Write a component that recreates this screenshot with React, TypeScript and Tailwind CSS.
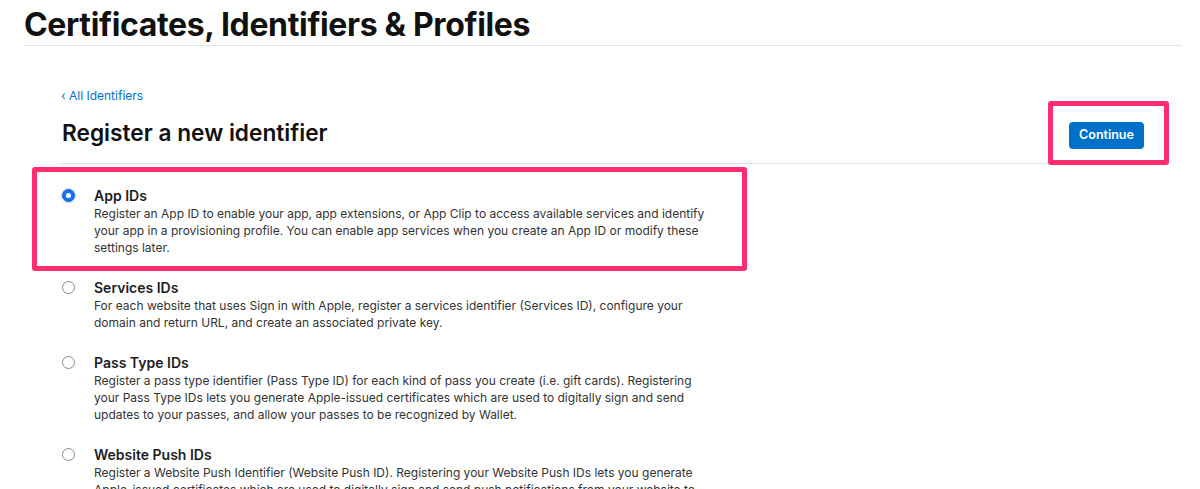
import React from "react";

const items = [
  {
    title: "App IDs",
    checked: true,
    lines: [
      "Register an App ID to enable your app, app extensions, or App Clip to access available services and identify",
      "your app in a provisioning profile. You can enable app services when you create an App ID or modify these",
      "settings later.",
    ],
  },
  {
    title: "Services IDs",
    lines: [
      "For each website that uses Sign in with Apple, register a services identifier (Services ID), configure your",
      "domain and return URL, and create an associated private key.",
    ],
  },
  {
    title: "Pass Type IDs",
    lines: [
      "Register a pass type identifier (Pass Type ID) for each kind of pass you create (i.e. gift cards). Registering",
      "your Pass Type IDs lets you generate Apple-issued certificates which are used to digitally sign and send",
      "updates to your passes, and allow your passes to be recognized by Wallet.",
    ],
  },
  {
    title: "Website Push IDs",
    lines: [
      "Register a Website Push Identifier (Website Push ID). Registering your Website Push IDs lets you generate",
      "Apple-issued certificates which are used to digitally sign and send push notifications from your website to",
      "macOS.",
    ],
  },
];

function Radio({ checked }: { checked?: boolean }) {
  return checked ? (
    <div className="w-[13px] h-[13px] rounded-full bg-[#1a73e8] flex items-center justify-center border border-[#1967d2] shadow-[0_0_0_1px_#cfe0fb]">
      <div className="w-[5px] h-[5px] rounded-full bg-white" />
    </div>
  ) : (
    <div className="w-[13px] h-[13px] rounded-full border border-[#8a8a8a] bg-white" />
  );
}

export default function App() {
  return (
    <div
      className="relative w-[1200px] h-[489px] overflow-hidden bg-white text-[#1d1d1f]"
      style={{ fontFamily: "Inter, 'Liberation Sans', sans-serif" }}
    >
      <div className="pl-[24px] pr-[18px]">
        <h1 className="text-[32px] leading-[40px] font-bold tracking-[-0.35px] text-[#111] pt-[5px] pb-[0px] border-b border-[#e5e5e5]">
          Certificates, Identifiers &amp; Profiles
        </h1>
      </div>
      <div className="pl-[62px] pr-[56px] pt-[42px]">
        <a className="block text-[12px] leading-[16px] text-[#0070c9] -ml-[1px]">‹ All Identifiers</a>
        <div className="flex items-center justify-between border-b border-[#e0e0e0] h-[62px] mt-[-2px]">
          <h2 className="text-[22.7px] font-semibold text-[#111] mt-[2px]">
            Register a new identifier
          </h2>
          <button className="bg-[#0070c9] text-white text-[12.5px] font-semibold rounded-[4px] w-[75px] h-[27px] mt-[6px]">
            Continue
          </button>
        </div>
        <div className="pt-[23px] flex flex-col gap-[23px]">
          {items.map((it) => (
            <div key={it.title} className="flex">
              <div className="w-[32px] pt-[2px]">
                <Radio checked={it.checked} />
              </div>
              <div>
                <div className="text-[14px] leading-[18px] font-semibold text-[#1d1d1f]">{it.title}</div>
                {it.lines.map((l) => (
                  <div key={l} className="text-[12px] leading-[17px] text-[#333] whitespace-nowrap">
                    {l}
                  </div>
                ))}
              </div>
            </div>
          ))}
        </div>
      </div>
      <div className="absolute left-[32px] top-[167px] w-[715px] h-[104px] border-[5px] border-[#ff2d6e] rounded-[3px]" />
      <div className="absolute left-[1048px] top-[101px] w-[121px] h-[64px] border-[5px] border-[#ff2d6e] rounded-[3px]" />
    </div>
  );
}
